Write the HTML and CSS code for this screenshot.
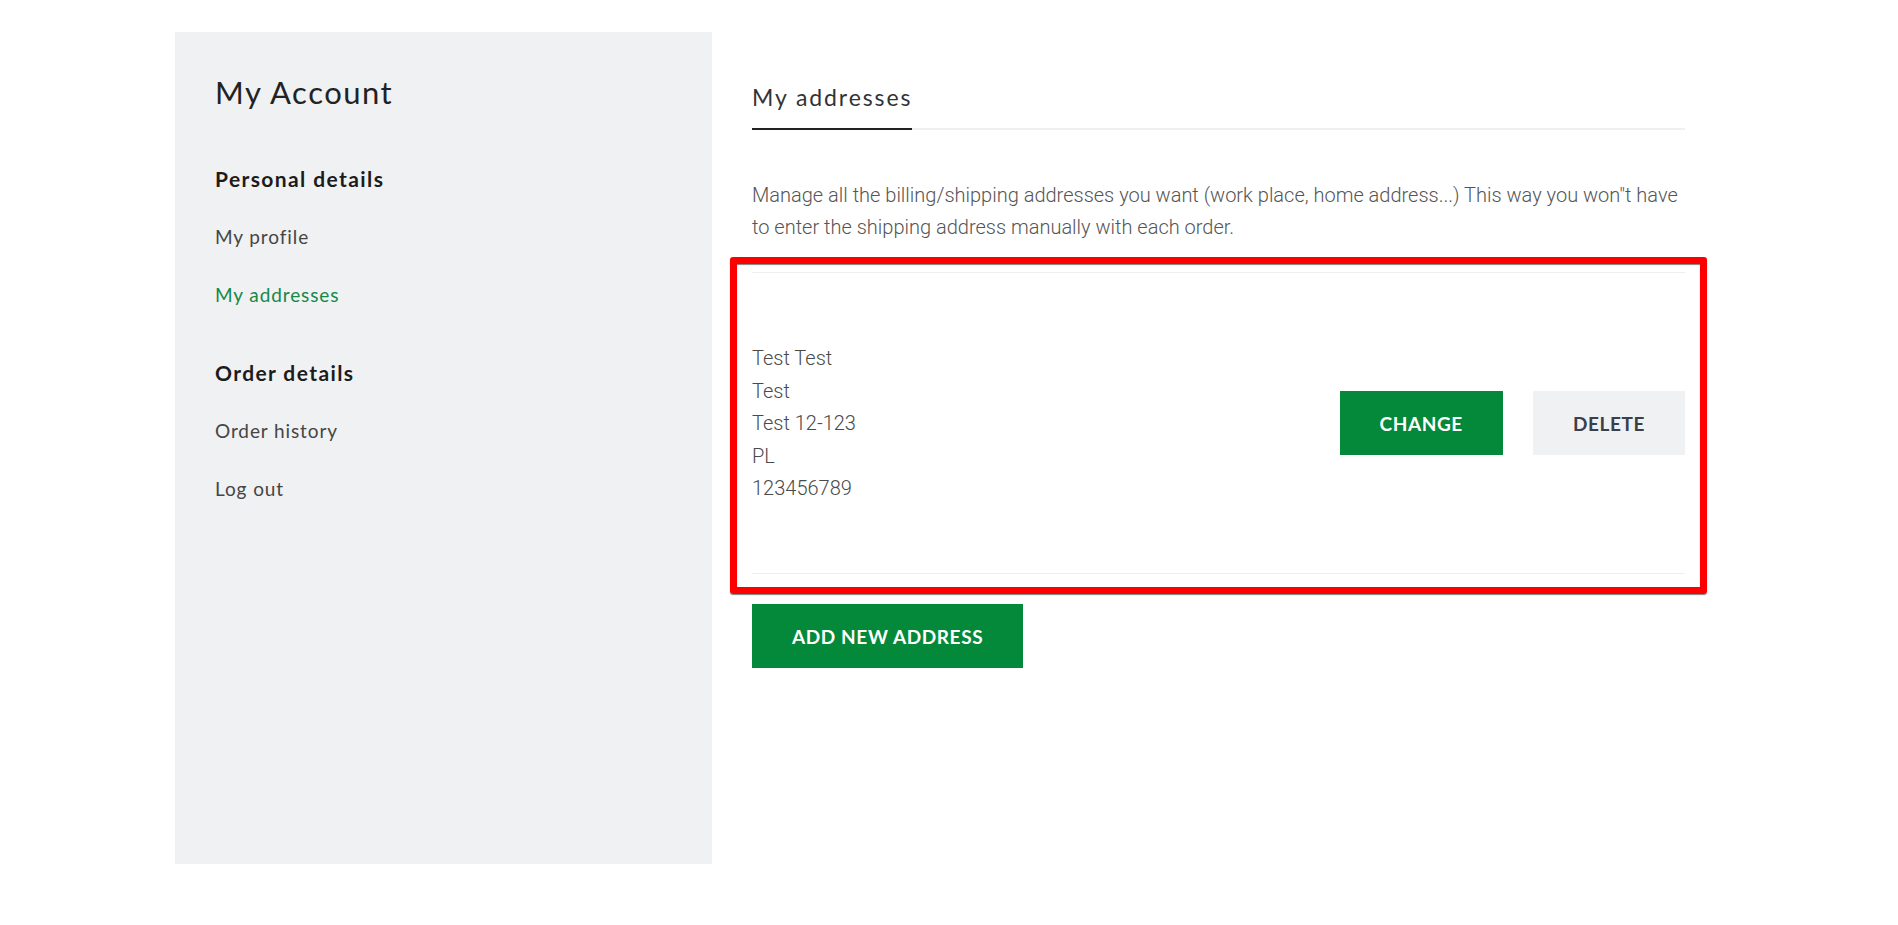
FILE: index.html
```html
<!DOCTYPE html>
<html lang="en">
<head>
<meta charset="utf-8">
<title>My addresses</title>
<link rel="stylesheet" href="styles.css">
</head>
<body>
<div class="page">
  <aside class="sidebar">
    <h1 class="sidebar-title">My Account</h1>
    <nav class="nav">
      <div class="nav-group">
        <h3 class="nav-heading">Personal details</h3>
        <a class="nav-link" href="#">My profile</a>
        <a class="nav-link active" href="#">My addresses</a>
      </div>
      <div class="nav-group">
        <h3 class="nav-heading">Order details</h3>
        <a class="nav-link" href="#">Order history</a>
        <a class="nav-link" href="#">Log out</a>
      </div>
    </nav>
  </aside>
  <main class="content">
    <div class="tabs"><span class="tab">My addresses</span></div>
    <p class="intro">Manage all the billing/shipping addresses you want (work place, home address...) This way you won"t have to enter the shipping address manually with each order.</p>
    <div class="address-card">
      <div class="highlight"></div>
      <address class="address">
        <span>Test Test</span>
        <span>Test</span>
        <span>Test 12-123</span>
        <span>PL</span>
        <span>123456789</span>
      </address>
      <div class="actions">
        <button class="btn btn-green">CHANGE</button>
        <button class="btn btn-grey">DELETE</button>
      </div>
    </div>
    <button class="btn btn-green btn-add">ADD NEW ADDRESS</button>
  </main>
</div>
</body>
</html>
```
FILE: styles.css
```css
* { box-sizing: border-box; }
html, body { margin: 0; padding: 0; background: #fff; }
body { font-family: Lato, "Liberation Sans", sans-serif; color: #333; }

.page {
  display: flex;
  align-items: flex-start;
  padding: 32px 0 0 175px;
}

.sidebar {
  width: 537px;
  height: 832px;
  flex: none;
  background: #f0f1f3;
  padding: 42px 40px 0 40px;
}
.sidebar-title {
  margin: 0;
  font-size: 31px;
  line-height: 37px;
  font-weight: 400;
  color: #222;
  letter-spacing: 1.5px;
}
.nav {
  display: flex;
  flex-direction: column;
  gap: 53px;
  margin-top: 55px;
}
.nav-group {
  display: flex;
  flex-direction: column;
  gap: 34px;
}
.nav-heading {
  margin: 0;
  font-size: 21px;
  line-height: 25px;
  font-weight: 700;
  color: #1c1c1c;
  letter-spacing: 1.4px;
}
.nav-link {
  display: block;
  font-size: 19px;
  line-height: 24px;
  color: #454545;
  text-decoration: none;
  letter-spacing: 0.9px;
}
.nav-link.active { color: #15884a; }

.content {
  width: 933px;
  margin-left: 40px;
  padding-top: 52px;
}
.tabs {
  border-bottom: 2px solid #f0f0f0;
  display: flex;
}
.tab {
  display: block;
  font-size: 23px;
  line-height: 27.6px;
  padding-bottom: 16px;
  margin-bottom: -2px;
  border-bottom: 2px solid #222;
  color: #333;
  letter-spacing: 1.9px;
}
.intro {
  margin: 49px 0 29px 0;
  font-family: Roboto, "Liberation Sans", sans-serif;
  font-weight: 300;
  font-size: 20px;
  line-height: 32.4px;
  color: #555;
}

.address-card {
  position: relative;
  display: flex;
  align-items: center;
  justify-content: space-between;
  border-top: 1px solid #eeeeee;
  border-bottom: 1px solid #eeeeee;
  padding: 69px 0;
}
.highlight {
  position: absolute;
  left: -22px;
  right: -22px;
  top: -16px;
  bottom: -21px;
  border: 7px solid #ff0000;
  border-radius: 3px;
  box-shadow: 0 1px 1px rgba(0,0,0,0.5), inset 0 1px 1px rgba(0,0,0,0.5);
  pointer-events: none;
}
.address {
  display: flex;
  flex-direction: column;
  font-style: normal;
  font-family: Roboto, "Liberation Sans", sans-serif;
  font-weight: 300;
  font-size: 20px;
  line-height: 32.4px;
  color: #4a4a4a;
}
.actions {
  display: flex;
  gap: 30px;
}
.btn {
  display: flex;
  align-items: center;
  justify-content: center;
  height: 64px;
  padding: 0 40px;
  border: 0;
  border-radius: 0;
  font-family: Lato, "Liberation Sans", sans-serif;
  font-weight: 700;
  font-size: 19px;
  letter-spacing: 0.6px;
  cursor: pointer;
}
.btn-green { background: #038939; color: #fff; }
.btn-grey { background: #f0f1f3; color: #3a3f4a; }
.btn-add { margin-top: 30px; }
```
